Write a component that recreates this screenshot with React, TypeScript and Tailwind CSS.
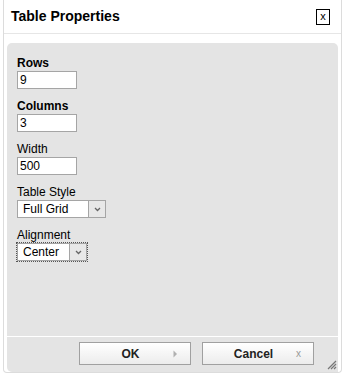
import React from "react";

const font = { fontFamily: '"Liberation Sans", Arial, sans-serif' };

function Field({ label, value, bold }: { label: string; value: string; bold?: boolean }) {
  return (
    <div className="flex flex-col">
      <span className={`text-[12px] leading-[14px] text-black ${bold ? "font-bold" : ""}`}>{label}</span>
      <div className="mt-[1px] h-[18px] w-[60px] border border-[#a5a5a5] bg-white px-[2px] text-[12px] leading-[16px] text-black">
        {value}
      </div>
    </div>
  );
}

function Select({ value, width, focused }: { value: string; width: string; focused?: boolean }) {
  return (
    <div className={`mt-[1px] flex h-[18px] ${width} items-stretch ${focused ? "outline-1 outline-dotted outline-[#555]" : ""}`}>
      <div className="flex flex-1 items-center border border-[#a5a5a5] bg-white pl-[5px] text-[12px] leading-[16px] text-black">
        {value}
      </div>
      <div className="flex w-[17px] items-center justify-center border border-l-0 border-[#a5a5a5] bg-[#e8e8e8]">
        <svg width="7" height="5" viewBox="0 0 7 5">
          <path d="M1 1 L3.5 3.5 L6 1" fill="none" stroke="#666" strokeWidth="1.3" />
        </svg>
      </div>
    </div>
  );
}

export default function App() {
  return (
    <div className="h-[375px] w-[344px] bg-white" style={font}>
      <div className="ml-[3px] flex h-[373px] w-[339px] flex-col rounded-b-[4px] border border-t-0 border-[#dcdcdc] bg-white">
        <div className="flex h-[34px] items-center justify-between border-b border-[#e6e6e6] pl-[7px] pr-[11px]">
          <span className="text-[14px] font-bold text-black">Table Properties</span>
          <div className="flex h-[16px] w-[14px] items-center justify-center border border-black text-[11px] leading-none text-black">
            x
          </div>
        </div>
        <div className="mx-[3px] mt-[9px] flex flex-1 flex-col">
          <div className="flex flex-1 flex-col gap-[10px] rounded-t-[5px] bg-[#e4e4e4] pl-[10px] pt-[13px]">
            <Field label="Rows" value="9" bold />
            <Field label="Columns" value="3" bold />
            <Field label="Width" value="500" />
            <div className="flex flex-col">
              <span className="text-[12px] leading-[14px] text-black">Table Style</span>
              <Select value="Full Grid" width="w-[89px]" />
            </div>
            <div className="flex flex-col">
              <span className="text-[12px] leading-[14px] text-black">Alignment</span>
              <Select value="Center" width="w-[70px]" focused />
            </div>
          </div>
          <div className="relative mt-[1px] flex h-[35px] items-start gap-[11px] rounded-bl-[5px] bg-[#e4e4e4] pl-[72px] pt-[5px]">
            <button className="flex h-[23px] w-[112px] items-center border border-[#a0a0a0] bg-gradient-to-b from-[#ffffff] to-[#ececec] text-[12px] font-bold text-[#222]">
              <span className="flex-1 pl-[8px] text-center">OK</span>
              <svg className="mr-[12px]" width="5" height="8" viewBox="0 0 5 8">
                <path d="M0.5 0.5 L4 4 L0.5 7.5 Z" fill="#b0b0b0" />
              </svg>
            </button>
            <button className="flex h-[23px] w-[112px] items-center border border-[#a0a0a0] bg-gradient-to-b from-[#ffffff] to-[#ececec] text-[12px] font-bold text-[#222]">
              <span className="flex-1 pl-[8px] text-center">Cancel</span>
              <span className="mr-[12px] text-[10px] font-normal text-[#999]">x</span>
            </button>
            <svg className="absolute bottom-[2px] right-[1px]" width="12" height="12" viewBox="0 0 12 12">
              <path d="M11 3 L3 11 M11 6 L6 11 M11 9 L9 11" stroke="#777" strokeWidth="1.2" />
            </svg>
          </div>
        </div>
      </div>
    </div>
  );
}
